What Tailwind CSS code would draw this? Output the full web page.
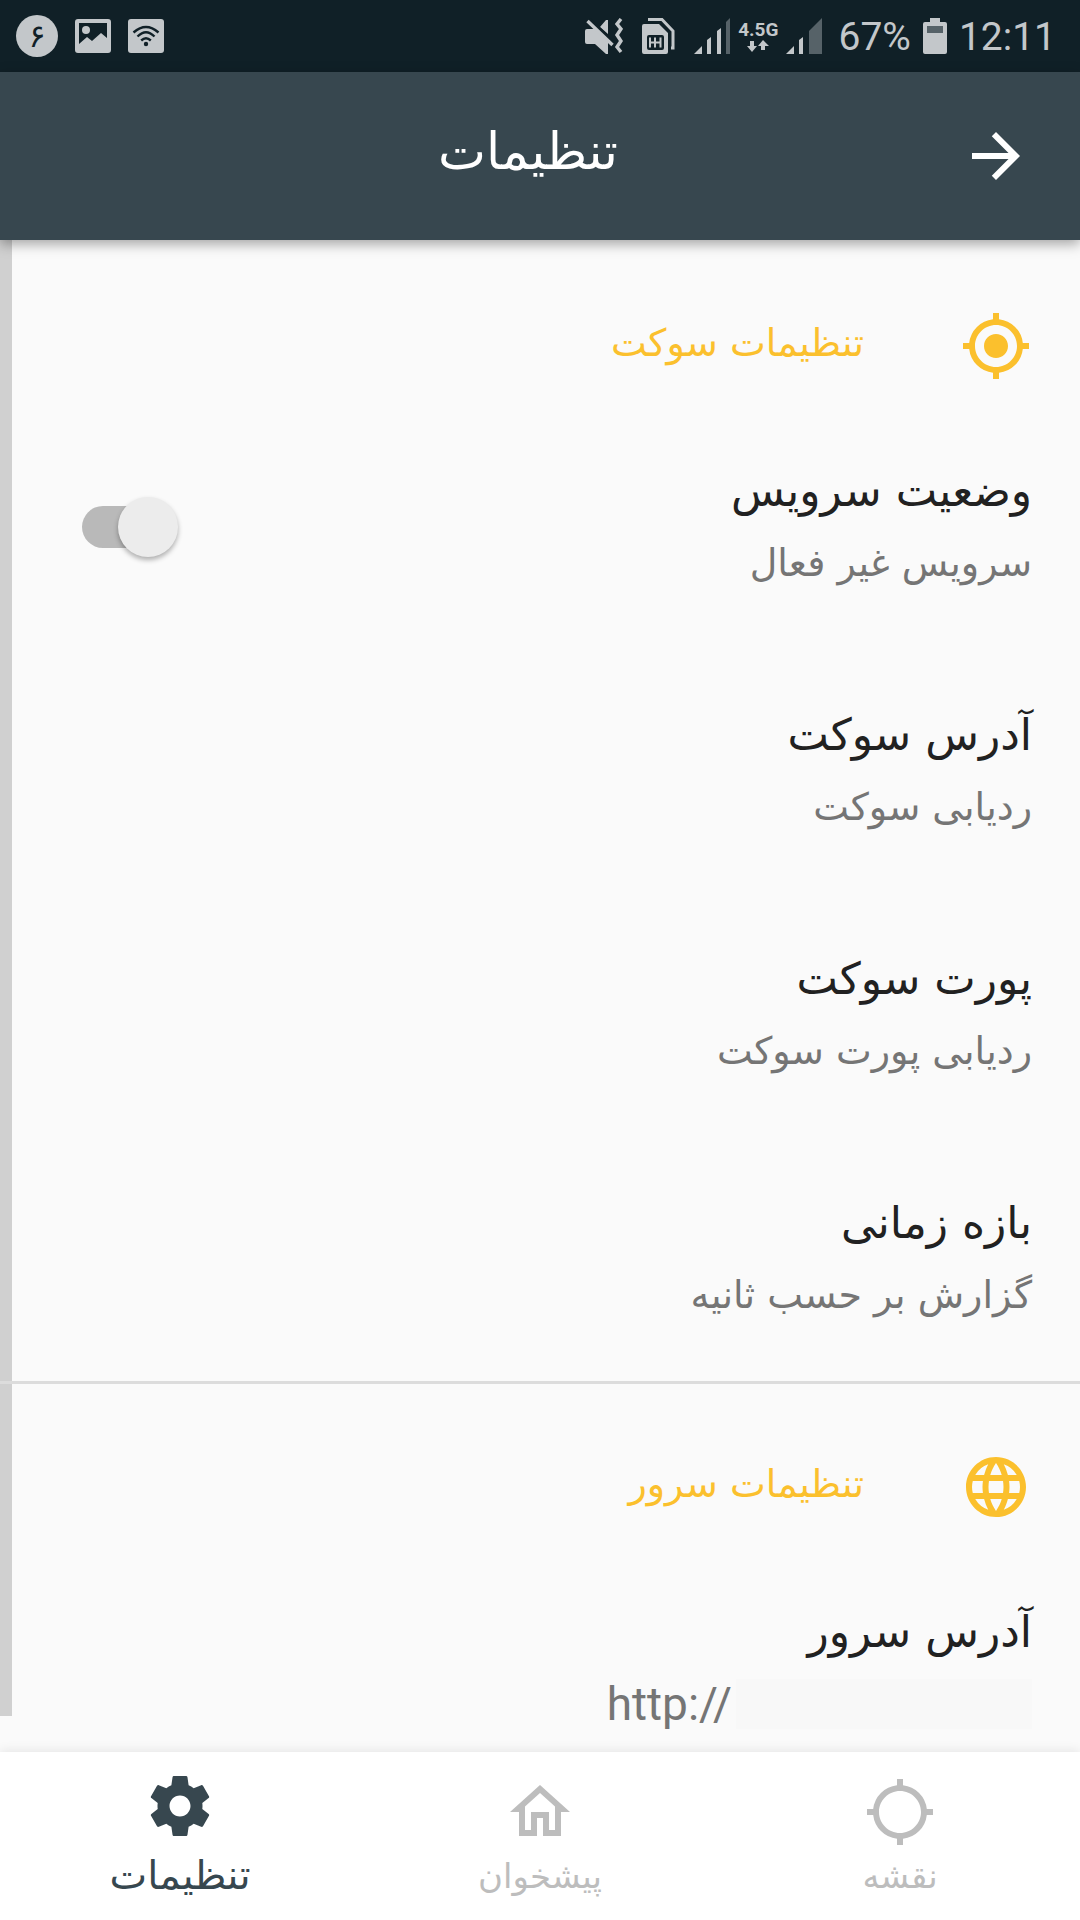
<!DOCTYPE html>
<html lang="fa" dir="rtl">
<head>
    <meta charset="UTF-8">
    <meta name="viewport" content="width=device-width, initial-scale=1.0">
    <title>تنظیمات</title>
    <script src="https://cdn.jsdelivr.net/npm/@tailwindcss/browser@4"></script>
</head>
<body class="flex h-screen flex-col overflow-hidden bg-[#fafafa] font-['DejaVu_Sans',sans-serif] text-[#212121]">
    <!-- Status bar -->
    <div dir="ltr" class="flex h-[72px] shrink-0 items-center justify-between bg-[#102027] pl-4 pr-6 font-[Roboto,sans-serif] text-[#c3c7ca]">
        <div class="flex items-center gap-[17px]">
            <div class="flex size-[42px] items-center justify-center rounded-full bg-[#c3c7ca] font-['DejaVu_Sans',sans-serif] text-[32px] leading-none text-[#102027]">۶</div>
            <svg class="h-[34px] w-9" viewBox="0 0 36 34" fill="currentColor">
                <path fill-rule="evenodd" d="M3 0h30a3 3 0 0 1 3 3v28a3 3 0 0 1-3 3H3a3 3 0 0 1-3-3V3a3 3 0 0 1 3-3zm1 4v21l8-7 5 4 9-8 6 5V4z"/>
                <circle cx="11" cy="11" r="4"/>
            </svg>
            <svg class="h-[34px] w-9" viewBox="0 0 36 34">
                <rect width="36" height="34" rx="3" fill="currentColor"/>
                <g fill="none" stroke="#102027" stroke-width="2.4">
                    <path d="M5.500 13.500Q18 2.500 30.500 13.500"/>
                    <path d="M9.500 17.500Q18 9 26.500 17.500"/>
                    <path d="M13.200 21.500Q18 17 22.800 21.500"/>
                </g>
                <circle cx="18" cy="25" r="2.200" fill="#102027"/>
            </svg>
        </div>
        <div class="flex items-center gap-4">
            <div class="flex items-center gap-[19px]">
                <svg class="h-9 w-[38px]" viewBox="0 0 38 36" fill="currentColor">
                    <path d="M2 11h8l13 13v12h-2l-11-10H2a2 2 0 0 1-2-2V13a2 2 0 0 1 2-2zM15 9l6-7h2v14z"/>
                    <path d="M4 1l24 24" fill="none" stroke="#102027" stroke-width="4"/>
                    <path d="M2.500 3l25 24M36 1l-4 5 4 5-4 6 4 6-4 6 4 5" fill="none" stroke="currentColor" stroke-width="3.400"/>
                </svg>
                <svg class="h-9 w-[33px]" viewBox="0 0 33 36" fill="currentColor">
                    <path d="M6 1.500h14L31 13v17h-2" fill="none" stroke="currentColor" stroke-width="3"/>
                    <path fill-rule="evenodd" d="M2 6h15l9 9v19a2 2 0 0 1-2 2H2a2 2 0 0 1-2-2V8a2 2 0 0 1 2-2zm5 11a2 2 0 0 0-2 2v11a2 2 0 0 0 2 2h13a2 2 0 0 0 2-2V19a2 2 0 0 0-2-2z"/>
                    <path d="M8 19.500v10M13 19.500v10M18.500 19.500v10M8 24.500h10.500" fill="none" stroke="currentColor" stroke-width="2"/>
                </svg>
                <div class="flex items-center gap-2">
                    <svg class="h-9 w-9" viewBox="0 0 36 36" fill="currentColor">
                        <path d="M8 28v8H0zM17 19v17h-4V22zM27 10v26h-4V13z"/>
                        <path d="M36 0v36h-4V4z" fill="#566268"/>
                    </svg>
                    <div class="flex flex-col items-center text-[19px] font-bold leading-[20px]">
                        4.5G
                        <svg class="h-3 w-[22px]" viewBox="0 0 22 12" fill="currentColor">
                            <path d="M3 1h4v5h3l-5 6-5-6h3zM14 10h4V6h4l-6-6-5 6h3z"/>
                        </svg>
                    </div>
                    <svg class="h-9 w-9" viewBox="0 0 36 36" fill="currentColor">
                        <path d="M8 28v8H0zM17 19v17h-4V22z"/>
                        <path d="M36 0v36H23V13z" fill="#566268"/>
                    </svg>
                </div>
            </div>
            <div class="flex items-center gap-3 text-[39px] leading-[44px]">
                <span class="pt-0.5">67%</span>
                <svg class="h-9 w-6" viewBox="0 0 24 36" fill="currentColor">
                    <path d="M7 0h10v4h5a2 2 0 0 1 2 2v28a2 2 0 0 1-2 2H2a2 2 0 0 1-2-2V6a2 2 0 0 1 2-2h5z"/>
                    <path d="M4 8h16v7H4z" fill="#566268"/>
                </svg>
                <span class="pt-0.5">12:11</span>
            </div>
        </div>
    </div>

    <!-- App bar -->
    <header class="z-10 flex h-[168px] shrink-0 items-center bg-[#37474f] pl-24 pr-12 text-white shadow-[0_4px_12px_rgba(0,0,0,0.35)]">
        <button type="button" aria-label="بازگشت" class="size-[72px]">
            <svg class="size-[72px]" viewBox="0 0 24 24" fill="currentColor"><path d="M12 4l-1.410 1.410L16.170 11H4v2h12.170l-5.580 5.590L12 20l8-8z"/></svg>
        </button>
        <h1 class="flex-1 pb-2 text-center text-[51px] leading-[72px]">تنظیمات</h1>
    </header>

    <main class="relative min-h-0 flex-1 overflow-hidden">
        <div class="absolute left-0 top-0 bottom-9 w-3 bg-[#d0d0d0]"></div>

        <section>
            <div class="flex items-center gap-24 px-12 pb-[23px] pt-[70px] text-[#fbc02d]">
                <svg class="size-[72px]" viewBox="0 0 24 24" fill="currentColor"><path d="M12 8c-2.210 0-4 1.790-4 4s1.790 4 4 4 4-1.790 4-4-1.790-4-4-4zm8.940 3A8.994 8.994 0 0 0 13 3.060V1h-2v2.060A8.994 8.994 0 0 0 3.060 11H1v2h2.060A8.994 8.994 0 0 0 11 20.940V23h2v-2.060A8.994 8.994 0 0 0 20.940 13H23v-2h-2.060zM12 19c-3.870 0-7-3.130-7-7s3.130-7 7-7 7 3.130 7 7-3.130 7-7 7z"/></svg>
                <h2 class="text-[38px] leading-[66px] pb-1.5">تنظیمات سوکت</h2>
            </div>
            <label class="flex items-center justify-between py-[50px] pl-[82px] pr-12">
                <span class="flex flex-col">
                    <span class="text-[44px] leading-[72px]">وضعیت سرویس</span>
                    <span class="text-[38px] leading-[72px] text-[#757575]">سرویس غیر فعال</span>
                </span>
                <input type="checkbox" role="switch" class="relative h-[60px] w-24 appearance-none before:absolute before:left-0 before:top-[9px] before:h-[42px] before:w-20 before:rounded-full before:bg-[#b9b9b9] after:absolute after:right-0 after:top-0 after:size-[60px] after:rounded-full after:bg-[#ececec] after:shadow-[0_3px_5px_rgba(0,0,0,0.3)]">
            </label>
            <div class="py-[50px] px-12">
                <h3 class="text-[44px] leading-[72px]">آدرس سوکت</h3>
                <p class="text-[38px] leading-[72px] text-[#757575]">ردیابی سوکت</p>
            </div>
            <div class="py-[50px] px-12">
                <h3 class="text-[44px] leading-[72px]">پورت سوکت</h3>
                <p class="text-[38px] leading-[72px] text-[#757575]">ردیابی پورت سوکت</p>
            </div>
            <div class="py-[50px] px-12">
                <h3 class="text-[44px] leading-[72px]">بازه زمانی</h3>
                <p class="text-[38px] leading-[72px] text-[#757575]">گزارش بر حسب ثانیه</p>
            </div>
        </section>

        <section class="relative border-t-3 border-[#dcdcdc]">
            <div class="flex items-center gap-24 px-12 pb-[23px] pt-[67px] text-[#fbc02d]">
                <svg class="size-[72px]" viewBox="0 0 24 24" fill="currentColor"><path d="M11.990 2C6.470 2 2 6.480 2 12s4.470 10 9.990 10C17.520 22 22 17.520 22 12S17.520 2 11.990 2zm6.930 6h-2.950a15.650 15.650 0 0 0-1.380-3.560A8.030 8.030 0 0 1 18.920 8zM12 4.040c.830 1.200 1.480 2.530 1.910 3.960h-3.820c.430-1.430 1.080-2.760 1.910-3.960zM4.260 14C4.100 13.360 4 12.690 4 12s.100-1.360.260-2h3.380c-.080.660-.140 1.320-.140 2 0 .680.060 1.340.140 2H4.260zm.820 2h2.950c.320 1.250.780 2.450 1.380 3.560A7.987 7.987 0 0 1 5.080 16zm2.950-8H5.080a7.987 7.987 0 0 1 4.330-3.560A15.650 15.650 0 0 0 8.030 8zM12 19.960c-.830-1.200-1.480-2.530-1.910-3.960h3.820c-.430 1.430-1.080 2.760-1.910 3.960zM14.340 14H9.660c-.090-.660-.160-1.320-.160-2 0-.680.070-1.350.160-2h4.680c.090.650.160 1.320.160 2 0 .680-.070 1.340-.160 2zm.250 5.560c.600-1.110 1.060-2.310 1.380-3.560h2.950a8.030 8.030 0 0 1-4.330 3.560zM16.360 14c.080-.660.140-1.320.140-2 0-.680-.060-1.340-.140-2h3.380c.160.640.260 1.310.260 2s-.100 1.360-.260 2h-3.380z"/></svg>
                <h2 class="text-[38px] leading-[66px] pb-1.5">تنظیمات سرور</h2>
            </div>
            <div class="py-[50px] px-12">
                <h3 class="text-[44px] leading-[72px]">آدرس سرور</h3>
                <p dir="ltr" class="flex items-center justify-end gap-1 font-[Roboto,sans-serif] text-[46px] leading-[72px] text-[#757575]">
                    http://
                    <span class="h-[50px] w-[296px] bg-[#f8f8f8]"></span>
                </p>
            </div>
        </section>
    </main>

    <!-- Bottom navigation -->
    <nav class="z-10 grid h-[168px] shrink-0 grid-cols-3 bg-white text-[#bdbdbd] shadow-[0_-2px_10px_rgba(0,0,0,0.08)]">
        <a href="#" class="flex flex-col items-center pt-6">
            <svg class="size-[72px]" viewBox="0 0 24 24" fill="currentColor"><path d="M20.940 11A8.994 8.994 0 0 0 13 3.060V1h-2v2.060A8.994 8.994 0 0 0 3.060 11H1v2h2.060A8.994 8.994 0 0 0 11 20.940V23h2v-2.060A8.994 8.994 0 0 0 20.940 13H23v-2h-2.060zM12 19c-3.870 0-7-3.130-7-7s3.130-7 7-7 7 3.130 7 7-3.130 7-7 7z"/></svg>
            <span class="text-[34px] leading-[56px]">نقشه</span>
        </a>
        <a href="#" class="flex flex-col items-center pt-6">
            <svg class="size-[72px]" viewBox="0 0 24 24" fill="currentColor"><path d="M12 5.690l5 4.500V18h-2v-6H9v6H7v-7.810l5-4.500M12 3L2 12h3v8h6v-6h2v6h6v-8h3L12 3z"/></svg>
            <span class="text-[34px] leading-[56px]">پیشخوان</span>
        </a>
        <a href="#" aria-current="page" class="flex flex-col items-center pt-[18px] text-[#37474f]">
            <svg class="size-[72px]" viewBox="0 0 24 24" fill="currentColor"><path d="M19.430 12.980c.040-.320.070-.640.070-.980s-.030-.660-.070-.980l2.110-1.650c.190-.150.240-.420.120-.640l-2-3.460c-.120-.220-.390-.300-.610-.220l-2.490 1c-.520-.400-1.080-.730-1.690-.980l-.380-2.650A.488.488 0 0 0 14 2h-4c-.250 0-.460.180-.490.420l-.380 2.650c-.610.250-1.170.590-1.690.980l-2.490-1c-.230-.090-.490 0-.610.220l-2 3.460c-.130.220-.070.490.120.640l2.110 1.650c-.040.320-.070.650-.070.980s.030.660.070.980l-2.110 1.650c-.190.150-.240.420-.120.640l2 3.460c.120.220.390.300.610.220l2.490-1c.520.400 1.080.730 1.690.980l.380 2.650c.030.240.240.420.490.420h4c.250 0 .460-.180.490-.420l.380-2.650c.610-.250 1.170-.590 1.690-.980l2.490 1c.230.090.490 0 .610-.220l2-3.460c.120-.220.070-.490-.120-.640l-2.110-1.650zM12 15.500c-1.930 0-3.500-1.570-3.500-3.500s1.570-3.500 3.500-3.500 3.500 1.570 3.500 3.500-1.570 3.500-3.500 3.500z"/></svg>
            <span class="text-[40px] leading-[66px]">تنظیمات</span>
        </a>
    </nav>
</body>
</html>
